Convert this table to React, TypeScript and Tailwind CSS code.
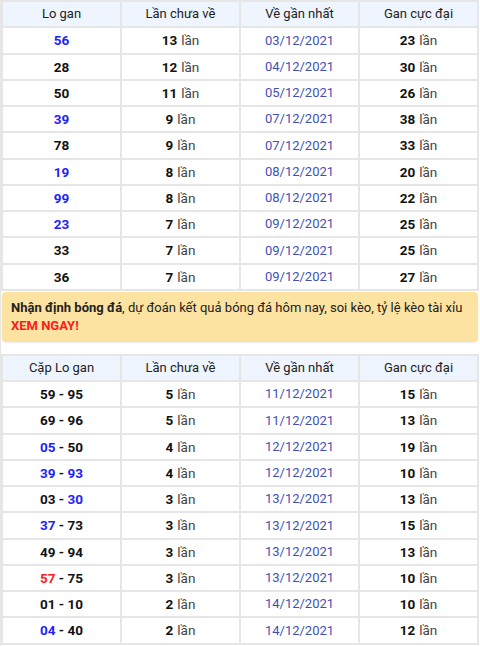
import React from "react";

type Seg = { t: string; c?: string };
type Row = { lo: Seg[]; n: number; d: string; g: number };

const B = "#1e1eff";
const R = "#ff2020";

const rows1: Row[] = [
  { lo: [{ t: "56", c: B }], n: 13, d: "03/12/2021", g: 23 },
  { lo: [{ t: "28" }], n: 12, d: "04/12/2021", g: 30 },
  { lo: [{ t: "50" }], n: 11, d: "05/12/2021", g: 26 },
  { lo: [{ t: "39", c: B }], n: 9, d: "07/12/2021", g: 38 },
  { lo: [{ t: "78" }], n: 9, d: "07/12/2021", g: 33 },
  { lo: [{ t: "19", c: B }], n: 8, d: "08/12/2021", g: 20 },
  { lo: [{ t: "99", c: B }], n: 8, d: "08/12/2021", g: 22 },
  { lo: [{ t: "23", c: B }], n: 7, d: "09/12/2021", g: 25 },
  { lo: [{ t: "33" }], n: 7, d: "09/12/2021", g: 25 },
  { lo: [{ t: "36" }], n: 7, d: "09/12/2021", g: 27 },
];

const rows2: Row[] = [
  { lo: [{ t: "59" }, { t: " - " }, { t: "95" }], n: 5, d: "11/12/2021", g: 15 },
  { lo: [{ t: "69" }, { t: " - " }, { t: "96" }], n: 5, d: "11/12/2021", g: 13 },
  { lo: [{ t: "05", c: B }, { t: " - " }, { t: "50" }], n: 4, d: "12/12/2021", g: 19 },
  { lo: [{ t: "39", c: B }, { t: " - " }, { t: "93", c: B }], n: 4, d: "12/12/2021", g: 10 },
  { lo: [{ t: "03" }, { t: " - " }, { t: "30", c: B }], n: 3, d: "13/12/2021", g: 13 },
  { lo: [{ t: "37", c: B }, { t: " - " }, { t: "73" }], n: 3, d: "13/12/2021", g: 15 },
  { lo: [{ t: "49" }, { t: " - " }, { t: "94" }], n: 3, d: "13/12/2021", g: 13 },
  { lo: [{ t: "57", c: R }, { t: " - " }, { t: "75" }], n: 3, d: "13/12/2021", g: 10 },
  { lo: [{ t: "01" }, { t: " - " }, { t: "10" }], n: 2, d: "14/12/2021", g: 10 },
  { lo: [{ t: "04", c: B }, { t: " - " }, { t: "40" }], n: 2, d: "14/12/2021", g: 12 },
];

function Table({ first, rows }: { first: string; rows: Row[] }) {
  const headers = [first, "Lần chưa về", "Về gần nhất", "Gan cực đại"];
  return (
    <div className="grid grid-cols-4 gap-[2px] bg-[#e6e6e6] p-[2px]">
      {headers.map((h) => (
        <div
          key={h}
          className="flex h-[24.25px] items-center justify-center bg-[#eef5fe] text-[13px] text-[#222]"
        >
          {h}
        </div>
      ))}
      {rows.map((r, i) => (
        <React.Fragment key={i}>
          <div className="flex h-[24.25px] items-center justify-center bg-white text-[13.5px] font-bold text-[#111]">
            {r.lo.map((s, j) => (
              <span key={j} style={s.c ? { color: s.c } : undefined} className="whitespace-pre">
                {s.t}
              </span>
            ))}
          </div>
          <div className="flex h-[24.25px] items-center justify-center bg-white text-[13.5px] text-[#444]">
            <span className="mr-[4px] font-bold text-[#111]">{r.n}</span>lần
          </div>
          <div className="flex h-[24.25px] items-center justify-center bg-white text-[13px] text-[#3f51b5]">
            {r.d}
          </div>
          <div className="flex h-[24.25px] items-center justify-center bg-white text-[13.5px] text-[#444]">
            <span className="mr-[4px] font-bold text-[#111]">{r.g}</span>lần
          </div>
        </React.Fragment>
      ))}
    </div>
  );
}

export default function App() {
  return (
    <div
      className="h-[646px] w-[480px] border-l border-[#e6e6e6] bg-white"
      style={{ fontFamily: "Roboto, 'Liberation Sans', sans-serif" }}
    >
      <div className="pr-px">
        <Table first="Lo gan" rows={rows1} />
        <div className="mx-[1px] mt-px h-[50px] rounded-[4px] bg-[#fde3a1] px-[9px] pt-[7px] text-[13px] leading-[18px] text-[#222] shadow-[0_1px_2px_rgba(0,0,0,0.08)]">
          <b>Nhận định bóng đá</b>, dự đoán kết quả bóng đá hôm nay, soi kèo, tỷ lệ kèo tài xỉu
          <br />
          <b className="text-[#ff1a1a]">XEM NGAY!</b>
        </div>
        <div className="mt-[12px]">
          <Table first="Cặp Lo gan" rows={rows2} />
        </div>
      </div>
    </div>
  );
}
